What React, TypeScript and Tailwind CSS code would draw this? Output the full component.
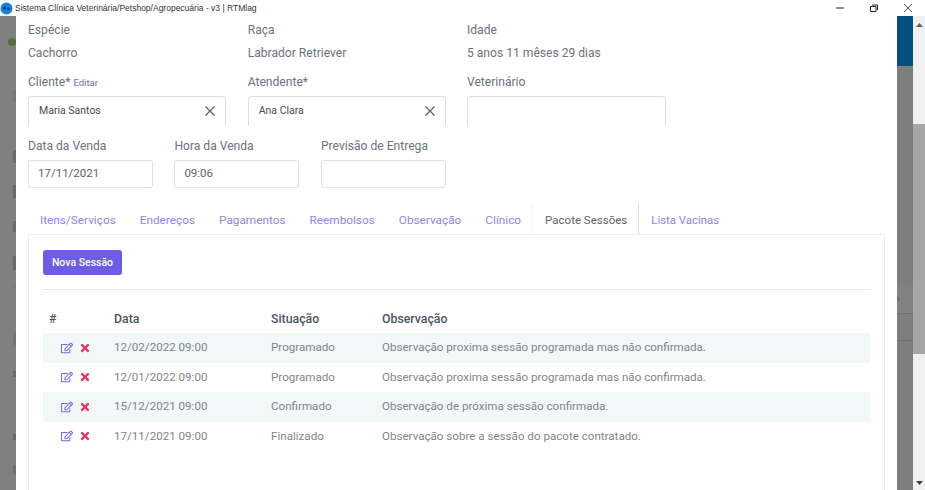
import React from 'react';
import { FaRegEdit, FaTimes } from 'react-icons/fa';

const sessoes = [
  { data: '12/02/2022 09:00', situacao: 'Programado', obs: 'Observação proxima sessão programada mas não confirmada.' },
  { data: '12/01/2022 09:00', situacao: 'Programado', obs: 'Observação proxima sessão programada mas não confirmada.' },
  { data: '15/12/2021 09:00', situacao: 'Confirmado', obs: 'Observação de próxima sessão confirmada.' },
  { data: '17/11/2021 09:00', situacao: 'Finalizado', obs: 'Observação sobre a sessão do pacote contratado.' },
];

const tabs = ['Itens/Serviços', 'Endereços', 'Pagamentos', 'Reembolsos', 'Observação', 'Clínico'];

// restos da página de trás que aparecem na faixa escura
const marcas = [
  'mt-[44px] h-[12px] bg-[#757575]',
  'mt-[48px] h-[13px] bg-[#6b6b6b]',
  'mt-[22px] h-[13px] bg-[#6b6b6b]',
  'mt-[23px] h-[11px] bg-[#6b6b6b]',
  'mt-[24px] h-[14px] bg-[#6b6b6b]',
  'mt-[16px] h-px w-4 bg-[#757575]',
  'mt-[45px] h-[13px] bg-[#757575]',
  'mt-[26px] h-[6px] bg-[#6b6b6b]',
  'mt-[57px] h-[6px] bg-[#6b6b6b]',
  'mt-[25px] h-[9px] bg-[#707070]',
];

const ClearIcon = () => (
  <svg width="10" height="10" viewBox="0 0 10 10" className="text-[#5a5a5a]">
    <path d="M.5.5l9 9M9.5.5l-9 9" stroke="currentColor" strokeWidth="1.1" />
  </svg>
);

const Select = ({ value, wide }: { value?: string; wide?: boolean }) => (
  <div className={`h-[30px] ${wide ? 'w-[199px]' : 'w-[198px]'} flex items-center justify-between pl-[10px] pr-[10px] pb-[1px] bg-white rounded-t-[4px] border border-b-0 border-[#dcdcdc] text-[10.5px] text-[#4b4b4b]`}>
    <span>{value}</span>
    {value && <ClearIcon />}
  </div>
);

const Input = ({ value }: { value?: string }) => (
  <div className="h-[28px] w-[125px] flex items-center px-[9px] bg-white rounded-[3px] border border-[#dfdfdf] text-[11.5px] text-[#5b6470]">
    {value}
  </div>
);

export default function App() {
  return (
    <div className="h-[490px] w-[925px] overflow-hidden flex flex-col bg-white font-['Roboto','Liberation_Sans',sans-serif] text-[12.1px] text-[#6b7280]">
      {/* barra da janela */}
      <div className="h-4 flex items-center justify-between shrink-0 bg-white">
        <div className="flex items-center gap-[2px] text-[8.5px] text-[#333] font-['Liberation_Sans',sans-serif]">
          <svg width="13" height="13" viewBox="0 0 13 13">
            <circle cx="6.5" cy="6.5" r="6" fill="#1583d8" />
            <circle cx="4.5" cy="6" r="1.5" fill="#0d3f78" />
            <circle cx="8.5" cy="6.5" r="1.5" fill="#0d3f78" />
          </svg>
          <span>Sistema Clínica Veterinária/Petshop/Agropecuária - v3 | RTMlag</span>
        </div>
        <div className="flex items-center gap-[26px] pr-[13px]">
          <svg width="8" height="8" viewBox="0 0 8 8"><path d="M0 4h8" stroke="#222" /></svg>
          <svg width="8" height="8" viewBox="0 0 8 8"><path d="M.5 2.5h5.5v5H.5zM2 1h5.5v5" fill="none" stroke="#222" /></svg>
          <svg width="8" height="8" viewBox="0 0 8 8"><path d="M0 0l8 8M8 0L0 8" stroke="#222" strokeWidth=".8" /></svg>
        </div>
      </div>

      <div className="flex-1 flex min-h-0">
        {/* fundo escurecido à esquerda */}
        <div className="w-4 shrink-0 bg-[#808080] pt-[22px] flex flex-col items-end">
          <div className="w-[8px] h-[8px] rounded-full bg-[#55703f]" />
          {marcas.map(m => <div key={m} className={`w-[3px] ${m}`} />)}
        </div>

        {/* modal */}
        <div className="w-[881px] shrink-0 bg-white pl-3 pt-[7px] overflow-hidden">
          <div className="grid grid-cols-[219.7px_219.3px_1fr] h-[52px]">
            <div>
              <div className="leading-[15px]">Espécie</div>
              <div className="mt-2 leading-[15px]">Cachorro</div>
            </div>
            <div>
              <div className="leading-[15px]">Raça</div>
              <div className="mt-2 leading-[15px]">Labrador Retriever</div>
            </div>
            <div>
              <div className="leading-[15px]">Idade</div>
              <div className="mt-2 leading-[15px]">5 anos 11 mêses 29 dias</div>
            </div>
          </div>

          <div className="grid grid-cols-[219.7px_219.3px_1fr] h-[63px]">
            <div>
              <div className="leading-[15px] h-[21px]">Cliente* <span className="text-[9.5px] text-[#7367f0]">Editar</span></div>
              <Select value="Maria Santos" />
            </div>
            <div>
              <div className="leading-[15px] h-[21px]">Atendente*</div>
              <Select value="Ana Clara" />
            </div>
            <div>
              <div className="leading-[15px] h-[21px]">Veterinário</div>
              <Select wide />
            </div>
          </div>

          <div className="grid grid-cols-[146.4px_146.6px_1fr] h-[66px]">
            <div>
              <div className="leading-[17px] h-[22px]">Data da Venda</div>
              <Input value="17/11/2021" />
            </div>
            <div>
              <div className="leading-[17px] h-[22px]">Hora da Venda</div>
              <Input value="09:06" />
            </div>
            <div>
              <div className="leading-[17px] h-[22px]">Previsão de Entrega</div>
              <Input />
            </div>
          </div>

          {/* abas */}
          <div className="w-[857px] h-[30px] flex items-center text-[11.8px] pl-3">
            <div className="flex gap-[24px] pt-[3px] text-[#8f85e8]">
              {tabs.map(t => <span key={t}>{t}</span>)}
            </div>
            <div className="ml-[11px] h-[30px] pl-[12px] pr-[11px] pt-[3px] flex items-center text-[11.5px] border-l border-r border-l-[#f3f3f3] border-r-[#dfdfdf] text-[#5f6368]">Pacote Sessões</div>
            <span className="ml-3 pt-[3px] text-[11.4px] text-[#8f85e8]">Lista Vacinas</span>
          </div>

          {/* painel */}
          <div className="w-[857px] h-[270px] border-l border-r border-t border-[#eeeeee] px-[14px] pt-[15px]">
            <button className="h-[25px] w-[79px] rounded-[3px] bg-[#6c5ce7] text-white text-[10.5px] font-medium flex items-center justify-center">
              Nova Sessão
            </button>
            <div className="mt-[14px] border-t border-[#e6e6e6]" />

            <div className="mt-[15px] w-[827px] text-[11.6px]">
              <div className="h-[28px] pt-[1px] grid grid-cols-[71px_157px_111px_1fr] items-center font-medium text-[12.3px] text-[#4b5563]">
                <span className="pl-[6px]">#</span>
                <span>Data</span>
                <span>Situação</span>
                <span>Observação</span>
              </div>
              {sessoes.map((s, i) => (
                <div
                  key={s.data}
                  className={`h-[29.5px] grid grid-cols-[71px_157px_111px_1fr] items-center text-[#80858c] ${i % 2 === 0 ? 'bg-[#f2f7f7]' : ''}`}
                >
                  <div className="flex items-center gap-[6px] pl-[18px]">
                    <FaRegEdit className="text-[#7367f0] text-[12px]" />
                    <FaTimes className="text-[#ea2d5a] text-[12px]" />
                  </div>
                  <span>{s.data}</span>
                  <span>{s.situacao}</span>
                  <span>{s.obs}</span>
                </div>
              ))}
            </div>
          </div>
        </div>

        {/* fundo à direita */}
        <div className="w-4 shrink-0 bg-[#7e7e7e]">
          <div className="h-[50px] bg-[#03507f]" />
          <div className="mt-[221px] h-[27px] flex items-center text-[9px] text-[#3f4a78] bg-[#828282] border-b border-[#707070]">›</div>
          <div className="mt-[26px] border-t border-[#707070]" />
        </div>

        {/* barra de rolagem */}
        <div className="w-3 shrink-0 bg-[#f0f0f0] flex flex-col">
          <div className="h-[17px] flex items-center justify-center">
            <svg width="7" height="4" viewBox="0 0 7 4"><path d="M3.5 0L7 4H0z" fill="#606060" /></svg>
          </div>
          <div className="mt-[91px] h-[230px] bg-[#a6a6a6]" />
          <div className="flex-1" />
          <div className="h-[15px] flex items-center justify-center">
            <svg width="7" height="4" viewBox="0 0 7 4"><path d="M3.5 4L7 0H0z" fill="#404040" /></svg>
          </div>
        </div>
      </div>
    </div>
  );
}
